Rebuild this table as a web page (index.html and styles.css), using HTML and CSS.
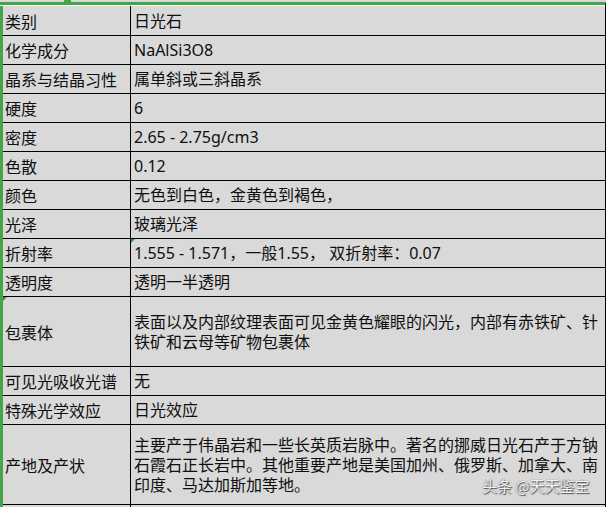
FILE: index.html
```html
<!DOCTYPE html>
<html lang="zh">
<head>
<meta charset="utf-8">
<link rel="stylesheet" href="styles.css">
</head>
<body>
<div class="topbar"><span class="handle"></span></div>
<div class="sheet">
  <div class="row first"><div class="key">类别</div><div class="val">日光石</div></div>
  <div class="row"><div class="key">化学成分</div><div class="val">NaAlSi3O8</div></div>
  <div class="row"><div class="key">晶系与结晶习性</div><div class="val">属单斜或三斜晶系</div></div>
  <div class="row"><div class="key">硬度</div><div class="val">6</div></div>
  <div class="row"><div class="key">密度</div><div class="val">2.65 - 2.75g/cm3</div></div>
  <div class="row"><div class="key">色散</div><div class="val">0.12</div></div>
  <div class="row"><div class="key">颜色</div><div class="val">无色到白色，金黄色到褐色，</div></div>
  <div class="row"><div class="key">光泽</div><div class="val">玻璃光泽</div></div>
  <div class="row"><div class="key">折射率</div><div class="val mark">1.555 - 1.571，一般1.55， 双折射率：0.07</div></div>
  <div class="row"><div class="key">透明度</div><div class="val">透明一半透明</div></div>
  <div class="row tall2"><div class="key mark">包裹体</div><div class="val">表面以及内部纹理表面可见金黄色耀眼的闪光，内部有赤铁矿、针<br>铁矿和云母等矿物包裹体</div></div>
  <div class="row"><div class="key">可见光吸收光谱</div><div class="val">无</div></div>
  <div class="row"><div class="key">特殊光学效应</div><div class="val">日光效应</div></div>
  <div class="row tall3"><div class="key">产地及产状</div><div class="val">主要产于伟晶岩和一些长英质岩脉中。著名的挪威日光石产于方钠<br>石霞石正长岩中。其他重要产地是美国加州、俄罗斯、加拿大、南<br>印度、马达加斯加等地。</div></div>
  <div class="row tail"><div class="key"></div><div class="val"></div></div>
</div>
<div class="watermark">头条 @天天鉴宝</div>
</body>
</html>
```
FILE: styles.css
```css
html, body {
  margin: 0;
  padding: 0;
}
body {
  width: 606px;
  height: 507px;
  overflow: hidden;
  background: #d9d9d9;
  font-family: "Noto Sans", "Noto Sans CJK SC", sans-serif;
  font-size: 16px;
  color: #0f0f0f;
  position: relative;
}
.topbar {
  height: 2px;
  position: relative;
}
.handle {
  position: absolute;
  left: 64px;
  top: 0;
  width: 7px;
  height: 2px;
  background: #43a547;
}
.sheet {
  border-top: 3px solid #43a547;
  border-left: 3px solid #43a547;
  border-right: 1px solid #000;
  box-sizing: border-box;
  width: 606px;
}
.sheet::before {
  content: "";
  display: block;
  height: 1px;
  background: #fff;
  margin-left: -3px;
}
.row {
  display: flex;
  height: 29px;
  border-bottom: 1px solid #000;
  box-sizing: border-box;
}
.row.first { height: 30px; }
.row.tall2 { height: 70px; }
.row.tall3 { height: 80px; }
.row.tail { height: 2px; border-bottom: none; }
.key {
  width: 128px;
  box-sizing: border-box;
  border-right: 1px solid #000;
  padding-left: 2px;
  display: flex;
  align-items: center;
  white-space: nowrap;
  position: relative;
}
.val {
  flex: 1;
  padding-left: 3px;
  display: flex;
  align-items: center;
  line-height: 20px;
  white-space: nowrap;
  position: relative;
}
.mark::before {
  content: "";
  position: absolute;
  left: 0;
  top: 0;
  width: 0;
  height: 0;
  border-top: 4px solid #2e9a3a;
  border-right: 4px solid transparent;
}
.watermark {
  position: absolute;
  left: 482px;
  top: 476px;
  font-size: 15px;
  line-height: 20px;
  color: #f4f4f4;
  font-family: "Noto Sans CJK SC", sans-serif;
  text-shadow: 0 0 1px #444, 1px 1px 1px #555;
  white-space: nowrap;
}
```
